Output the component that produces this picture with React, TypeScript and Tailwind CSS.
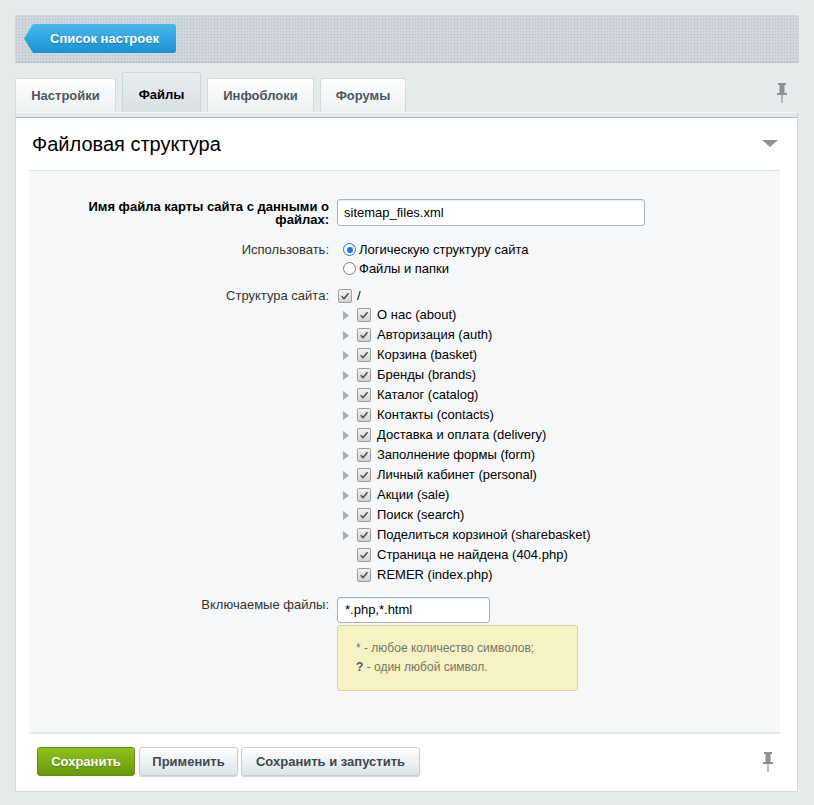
import React from 'react';

const treeItems: { label: string; arrow: boolean }[] = [
  { label: 'О нас (about)', arrow: true },
  { label: 'Авторизация (auth)', arrow: true },
  { label: 'Корзина (basket)', arrow: true },
  { label: 'Бренды (brands)', arrow: true },
  { label: 'Каталог (catalog)', arrow: true },
  { label: 'Контакты (contacts)', arrow: true },
  { label: 'Доставка и оплата (delivery)', arrow: true },
  { label: 'Заполнение формы (form)', arrow: true },
  { label: 'Личный кабинет (personal)', arrow: true },
  { label: 'Акции (sale)', arrow: true },
  { label: 'Поиск (search)', arrow: true },
  { label: 'Поделиться корзиной (sharebasket)', arrow: true },
  { label: 'Страница не найдена (404.php)', arrow: false },
  { label: 'REMER (index.php)', arrow: false },
];

const Check = () => (
  <span className="inline-flex h-[14px] w-[14px] shrink-0 items-center justify-center rounded-[2px] border border-[#9d9d9d] bg-linear-to-b from-[#f4f4f4] to-[#d2d2d2]">
    <svg width="10" height="10" viewBox="0 0 10 10">
      <path d="M1.6 5.3 L4 7.6 L8.6 2.3" fill="none" stroke="#505050" strokeWidth="1.5" />
    </svg>
  </span>
);

const Radio = ({ checked }: { checked?: boolean }) =>
  checked ? (
    <span className="inline-flex h-[13px] w-[13px] shrink-0 items-center justify-center rounded-full border-[1.5px] border-[#1a73e8] bg-white">
      <span className="h-[6px] w-[6px] rounded-full bg-[#1a73e8]" />
    </span>
  ) : (
    <span className="inline-block h-[13px] w-[13px] shrink-0 rounded-full border-[1.5px] border-[#7a7a7a] bg-white" />
  );

const Pin = () => (
  <svg width="12" height="20" viewBox="0 0 12 20" fill="#8b9196">
    <rect x="2" y="0" width="8" height="2" />
    <rect x="3.5" y="2" width="5" height="8" />
    <rect x="1" y="10" width="10" height="2" />
    <rect x="5.4" y="12" width="1.2" height="8" />
  </svg>
);

export default function App() {
  return (
    <div className="min-h-[805px] bg-[#e3ebeb] px-[15px] pt-[15px] pb-[12px] font-['Liberation_Sans',Arial,sans-serif] text-[13px] text-black">
      {/* top bar */}
      <div className="h-[48px] rounded-[2px] border-b border-[#b9c2c8] bg-[#d0d7dc] [background-image:radial-gradient(circle,#b5bdc4_0.8px,transparent_1px)] [background-size:3px_3px] pl-[9px] pt-[9px]">
        <button className="flex h-[29px] w-[152px] items-center justify-center rounded-r-[3px] bg-linear-to-b from-[#45b9ee] to-[#1b91d2] pl-[9px] text-[13px] font-bold text-white [clip-path:polygon(9px_0,100%_0,100%_100%,9px_100%,0_50%)] [text-shadow:0_1px_1px_rgba(0,0,0,0.25)]">
          Список настроек
        </button>
      </div>

      {/* tabs */}
      <div className="mt-[9px] flex h-[40px] items-end gap-[6px]">
        <div className="flex h-[34px] w-[101px] items-center justify-center rounded-t-[3px] border border-b-0 border-[#d3dbdd] bg-linear-to-b from-white to-[#edf1f2] font-bold text-[#4d5560]">
          Настройки
        </div>
        <div className="flex h-[40px] w-[79px] items-center justify-center rounded-t-[3px] border border-b-0 border-[#ccd5d8] bg-linear-to-b from-[#e8eef0] to-[#d9e1e3] pt-[5px] font-bold text-black">
          Файлы
        </div>
        <div className="flex h-[34px] w-[107px] items-center justify-center rounded-t-[3px] border border-b-0 border-[#d3dbdd] bg-linear-to-b from-white to-[#edf1f2] font-bold text-[#4d5560]">
          Инфоблоки
        </div>
        <div className="flex h-[34px] w-[86px] items-center justify-center rounded-t-[3px] border border-b-0 border-[#d3dbdd] bg-linear-to-b from-white to-[#edf1f2] font-bold text-[#4d5560]">
          Форумы
        </div>
        <div className="ml-auto mr-[11px] self-center pt-[2px]">
          <Pin />
        </div>
      </div>

      {/* panel */}
      <div className="mr-[1px] border-x border-b border-[#cfd8da] bg-white">
        <div className="h-[6px] border-t border-[#f4f7f7] border-b border-b-[#aeb9bc] bg-[#e3e9ea]" />
        <div className="flex h-[52px] items-center justify-between pl-[16px] pr-[19px]">
          <h2 className="text-[20px] font-normal text-black">Файловая структура</h2>
          <svg width="16" height="8" viewBox="0 0 16 8">
            <path d="M0 0 H16 L8 7 Z" fill="#8c9296" />
          </svg>
        </div>

        <div className="ml-[13px] mr-[17px] border-t border-[#d9e0e2] border-b-2 border-b-[#e2e8ea] bg-[#f5f7f8] pt-[28px] pb-[41px]">
          {/* row 1 */}
          <div className="flex items-center">
            <div className="w-[300px] pl-[45px] text-right text-[13px] leading-[13px] font-bold text-black">
              Имя файла карты сайта с данными о файлах:
            </div>
            <div className="ml-[8px] flex h-[27px] w-[308px] items-center rounded-[3px] border border-[#a9b1b6] bg-white pl-[6px] shadow-[inset_0_1px_1px_rgba(0,0,0,0.08)]">
              sitemap_files.xml
            </div>
          </div>

          {/* row 2 */}
          <div className="mt-[14px] flex">
            <div className="w-[300px] text-right leading-[19px] text-[#333]">Использовать:</div>
            <div className="ml-[14px] flex flex-col">
              <label className="flex h-[19px] items-center gap-[3px]">
                <Radio checked />
                <span>Логическую структуру сайта</span>
              </label>
              <label className="flex h-[19px] items-center gap-[3px]">
                <Radio />
                <span>Файлы и папки</span>
              </label>
            </div>
          </div>

          {/* row 3 */}
          <div className="mt-[9px] flex">
            <div className="w-[300px] text-right leading-[18px] text-[#333]">Структура сайта:</div>
            <div className="ml-[9px] flex flex-col">
              <div className="flex h-[18px] items-center gap-[5px]">
                <Check />
                <span>/</span>
              </div>
              {treeItems.map((item) => (
                <div key={item.label} className="flex h-[20px] items-center">
                  <span className="flex w-[19px] shrink-0 items-center pl-[5px]">
                    {item.arrow && (
                      <svg width="6" height="9" viewBox="0 0 6 9">
                        <path d="M0 0 L6 4.5 L0 9 Z" fill="#a7adb1" />
                      </svg>
                    )}
                  </span>
                  <Check />
                  <span className="ml-[6px] whitespace-nowrap">{item.label}</span>
                </div>
              ))}
            </div>
          </div>

          {/* row 4 */}
          <div className="mt-[12px] flex">
            <div className="w-[300px] text-right leading-[16px] text-[#333]">Включаемые файлы:</div>
            <div className="ml-[8px] flex flex-col">
              <div className="flex h-[26px] w-[153px] items-center rounded-[3px] border border-[#a9b1b6] bg-white pl-[7px] shadow-[inset_0_1px_1px_rgba(0,0,0,0.08)]">
                *.php,*.html
              </div>
              <div className="mt-[2px] h-[66px] w-[241px] rounded-[3px] border border-[#dcd29c] bg-[#f8f1c4] pt-[13px] pl-[18px] text-[12px] leading-[19px] text-[#767664]">
                <div>* - любое количество символов;</div>
                <div>
                  <b className="text-[#555]">?</b> - один любой символ.
                </div>
              </div>
            </div>
          </div>
        </div>

        {/* footer */}
        <div className="flex items-center pl-[21px] pr-[23px] pt-[13px] pb-[15px]">
          <button className="h-[29px] w-[98px] rounded-[3px] border border-[#64900c] bg-linear-to-b from-[#93bf1e] to-[#669a0b] text-[13px] font-bold text-white [text-shadow:0_1px_1px_rgba(0,0,0,0.25)]">
            Сохранить
          </button>
          <button className="ml-[4px] h-[29px] w-[99px] rounded-[3px] border border-[#c6ced2] bg-linear-to-b from-white to-[#dce4e7] text-[13px] font-bold text-[#3e4851] shadow-[0_1px_1px_rgba(0,0,0,0.18)]">
            Применить
          </button>
          <button className="ml-[3px] h-[29px] w-[179px] rounded-[3px] border border-[#c6ced2] bg-linear-to-b from-white to-[#dce4e7] text-[13px] font-bold text-[#3e4851] shadow-[0_1px_1px_rgba(0,0,0,0.18)]">
            Сохранить и запустить
          </button>
          <div className="ml-auto">
            <Pin />
          </div>
        </div>
      </div>
    </div>
  );
}
